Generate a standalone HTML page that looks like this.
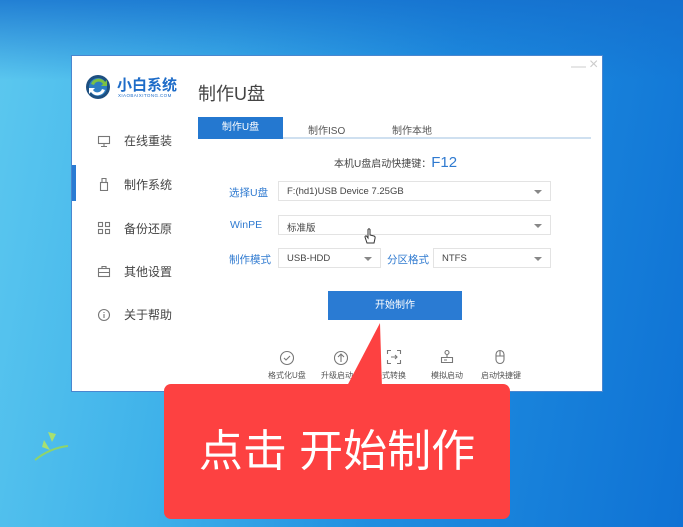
<!DOCTYPE html>
<html><head><meta charset="utf-8"><style>
*{margin:0;padding:0;box-sizing:border-box}
body{width:683px;height:527px;overflow:hidden;position:relative;font-family:"Liberation Sans","Noto Sans CJK SC",sans-serif;
background:linear-gradient(100deg,#5cc8ef 0%,#3fb2ea 30%,#1f8ee0 60%,#0f72d4 100%)}
.top{position:absolute;left:0;top:0;width:683px;height:80px;background:linear-gradient(180deg,rgba(20,110,205,.8),rgba(30,120,210,0))}
.win{position:absolute;left:71px;top:55px;width:532px;height:337px;background:#fff;border:1px solid #4a86cf}
.a{position:absolute;white-space:nowrap}
.side{font-size:12px;color:#444}
.sel{position:absolute;height:20px;border:1px solid #e3e3e3;font-size:9.5px;color:#444;padding:4px 0 0 8px}
.sel:after{content:"";position:absolute;right:8px;top:8px;border:4px solid transparent;border-top:4px solid #888;border-bottom:0}
.lbl{font-size:10.5px;color:#2f7ad0}
.bi{font-size:8px;color:#555}
svg.ic{position:absolute;fill:none;stroke:#777;stroke-width:1.1}
</style></head><body>
<div class="top"></div>
<svg class="a" style="left:30px;top:420px" width="40" height="50"><path d="M5 40 Q20 28 38 26" stroke="#8fd46a" stroke-width="2" fill="none"/><path d="M14 20 l6 10 l-8 -3z M18 12 l4 10 l4 -8z" fill="#a8e070"/></svg>
<div class="win">
 <div class="a" style="left:499px;top:2px;font-size:15px;color:#ccc">—</div>
 <div class="a" style="left:517px;top:0px;font-size:16px;color:#ccc">×</div>
 <svg class="a" style="left:12px;top:17px" width="28" height="28"><circle cx="14" cy="14" r="12" fill="#1d4f80"/><circle cx="14" cy="14" r="9" fill="#2d7ec2"/><path d="M7 11 a8 8 0 0 1 14 -2 l2-2 v6 h-6 l2-2 a5 5 0 0 0 -9 1z" fill="#7cc242"/><path d="M21 17 a8 8 0 0 1 -14 2 l-2 2 v-6 h6 l-2 2 a5 5 0 0 0 9 -1z" fill="#fff"/></svg>
 <div class="a" style="left:45px;top:18px;font-size:15px;font-weight:bold;color:#1e6cc8">小白系统</div>
 <div class="a" style="left:46px;top:37px;font-size:4.5px;color:#1e6cc8;letter-spacing:.4px">XIAOBAIXITONG.COM</div>
 <div class="a" style="left:126px;top:24px;font-size:18px;color:#444">制作U盘</div>
 <div class="a" style="left:0;top:109px;width:4px;height:36px;background:#2a7bd3"></div>
 <svg class="ic" style="left:25px;top:78px" width="14" height="14"><rect x="1.5" y="2.5" width="11" height="7"/><path d="M4 12.5h6M7 9.5v3"/></svg><div class="a side" style="left:52px;top:76px">在线重装</div>
 <svg class="ic" style="left:26px;top:121px" width="12" height="14"><rect x="2.5" y="5.5" width="7" height="8"/><path d="M4 5.5v-4h4v4"/></svg><div class="a side" style="left:52px;top:120px">制作系统</div>
 <svg class="ic" style="left:25px;top:165px" width="14" height="14"><rect x="1.5" y="1.5" width="4" height="4"/><rect x="1.5" y="8.5" width="4" height="4"/><rect x="8.5" y="1.5" width="4" height="4"/><rect x="8.5" y="8.5" width="4" height="4"/></svg><div class="a side" style="left:52px;top:164px">备份还原</div>
 <svg class="ic" style="left:25px;top:208px" width="14" height="14"><rect x="1.5" y="4.5" width="11" height="8"/><path d="M5 4.5v-2h4v2M1.5 8.5h11"/></svg><div class="a side" style="left:52px;top:207px">其他设置</div>
 <svg class="ic" style="left:25px;top:252px" width="14" height="14"><circle cx="7" cy="7" r="5.5"/><path d="M7 6v4M7 4v1"/></svg><div class="a side" style="left:52px;top:250px">关于帮助</div>
 <div class="a" style="left:126px;top:61px;width:85px;height:22px;background:#2478d0;color:#fff;font-size:10px;text-align:center;line-height:22px">制作U盘</div>
 <div class="a" style="left:211px;top:81px;width:308px;height:2px;background:#cfe0f0"></div>
 <div class="a" style="left:236px;top:66px;font-size:10px;color:#555">制作ISO</div>
 <div class="a" style="left:320px;top:66px;font-size:10px;color:#555">制作本地</div>
 <div class="a" style="left:262px;top:98px;font-size:10px;color:#444">本机U盘启动快捷键：<span style="font-size:15px;color:#2f7ad0">F12</span></div>
 <div class="a lbl" style="left:157px;top:129px">选择U盘</div>
 <div class="sel" style="left:206px;top:125px;width:273px">F:(hd1)USB Device 7.25GB</div>
 <div class="a lbl" style="left:158px;top:163px">WinPE</div>
 <div class="sel" style="left:206px;top:159px;width:273px">标准版</div>
 <svg class="a" style="left:291px;top:171px" width="14" height="18"><path d="M4 16 L2 10 Q2 8.5 3.5 9 L5 11 V2.5 Q6 1 7 2.5 V8 L11 9 Q12.5 9.5 12 11.5 L11 16 Z" fill="#fff" stroke="#333" stroke-width="1"/></svg>
 <div class="a lbl" style="left:157px;top:196px">制作模式</div>
 <div class="sel" style="left:206px;top:192px;width:103px">USB-HDD</div>
 <div class="a lbl" style="left:315px;top:196px">分区格式</div>
 <div class="sel" style="left:361px;top:192px;width:118px">NTFS</div>
 <div class="a" style="left:256px;top:235px;width:134px;height:29px;background:#2a7bd3;color:#fff;font-size:10px;text-align:center;line-height:29px">开始制作</div>
 <svg class="ic" style="left:207px;top:294px" width="16" height="16"><circle cx="8" cy="8" r="6.5"/><path d="M5 8l2 2 4-4"/></svg>
 <div class="a bi" style="left:196px;top:314px">格式化U盘</div>
 <svg class="ic" style="left:261px;top:294px" width="16" height="16"><circle cx="8" cy="8" r="6.5"/><path d="M8 12V4.5M5 7l3-3 3 3"/></svg>
 <div class="a bi" style="left:249px;top:314px">升级启动</div>
 <svg class="ic" style="left:314px;top:293px" width="16" height="16"><path d="M1.5 5V1.5H5M11 1.5h3.5V5M14.5 11v3.5H11M5 14.5H1.5V11M5 8h6M9 6l2 2-2 2"/></svg>
 <div class="a bi" style="left:302px;top:314px">格式转换</div>
 <svg class="ic" style="left:367px;top:293px" width="16" height="16"><circle cx="8" cy="3.5" r="2"/><path d="M8 5.5v3M2.5 8.5h11v5h-11zM5 11h3"/></svg>
 <div class="a bi" style="left:359px;top:314px">模拟启动</div>
 <svg class="ic" style="left:421px;top:293px" width="14" height="16"><rect x="3" y="1.5" width="8" height="13" rx="4"/><path d="M3 7h8M7 1.5v5.5"/></svg>
 <div class="a bi" style="left:409px;top:314px">启动快捷键</div>
</div>
<svg class="a" style="left:0;top:0" width="683" height="527">
 <path d="M346 388 L380 323 L382 388 Z" fill="#fd4141"/>
 <rect x="164" y="384" width="346" height="135" rx="7" fill="#fd4141"/>
</svg>
<div class="a" style="left:164px;top:428px;width:346px;text-align:center;font-size:44px;color:#fff;line-height:48px">点击 开始制作</div>
</body></html>
